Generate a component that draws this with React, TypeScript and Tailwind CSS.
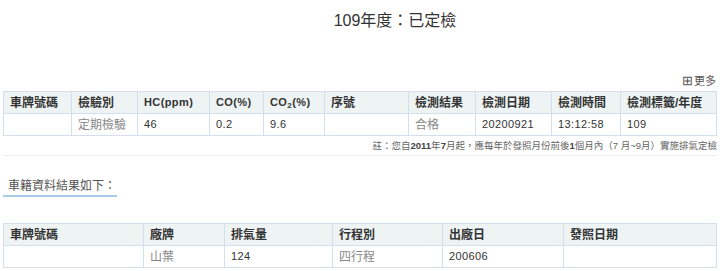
const cjk = "font-['Liberation_Sans','Noto_Sans_CJK_TC',sans-serif]";

const inspectCols = [
  { label: "車牌號碼", w: "w-[68px]" },
  { label: "檢驗別", w: "w-[66px]" },
  { label: "HC(ppm)", w: "w-[72px]" },
  { label: "CO(%)", w: "w-[54px]" },
  { label: "CO2", w: "w-[61px]" },
  { label: "序號", w: "w-[84px]" },
  { label: "檢測結果", w: "w-[67px]" },
  { label: "檢測日期", w: "w-[76px]" },
  { label: "檢測時間", w: "w-[69px]" },
  { label: "檢測標籤/年度", w: "" },
];

const inspectRow = ["", "定期檢驗", "46", "0.2", "9.6", "", "合格", "20200921", "13:12:58", "109"];

const carCols = [
  { label: "車牌號碼", w: "w-[140px]" },
  { label: "廠牌", w: "w-[81px]" },
  { label: "排氣量", w: "w-[108px]" },
  { label: "行程別", w: "w-[110px]" },
  { label: "出廠日", w: "w-[121px]" },
  { label: "發照日期", w: "" },
];

const carRow = ["", "山葉", "124", "四行程", "200606", ""];

const isCjk = (s: string) => /[\u4e00-\u9fff]/.test(s);

function HeaderCell({ label, w }: { label: string; w: string }) {
  return (
    <th
      className={`${w} h-[22px] whitespace-nowrap border border-[#d3dfea] bg-[#eef3f3] px-[6px] text-left font-bold text-[#333] ${
        isCjk(label) ? "text-[12px]" : "text-[11px] tracking-[0.4px]"
      }`}
    >
      {label === "CO2" ? (
        <>
          CO<sub className="text-[8px]">2</sub>(%)
        </>
      ) : (
        label
      )}
    </th>
  );
}

function DataCell({ value }: { value: string }) {
  return (
    <td
      className={`h-[22px] whitespace-nowrap border border-[#d3dfea] px-[6px] ${
        isCjk(value) ? "text-[12px] text-[#888]" : "text-[11px] tracking-[0.4px] text-[#333]"
      }`}
    >
      {value}
    </td>
  );
}

export default function App() {
  return (
    <div className={`${cjk} h-[271px] w-[720px] overflow-hidden bg-white`}>
      <h2 className="pl-[70px] pt-[11px] text-center text-[16px] leading-5 text-[#333]">
        109年度：已定檢
      </h2>

      <div className="mt-[43px] flex items-center justify-end pr-[4px] text-[11px] leading-[14px] text-[#555]">
        <span className="mr-[1px] text-[13px] leading-[14px]">⊞</span>更多
      </div>

      <div className="mx-[3px] mt-[3px]">
        <table className="w-full table-fixed border-collapse">
          <thead>
            <tr>
              {inspectCols.map((c) => (
                <HeaderCell key={c.label} {...c} />
              ))}
            </tr>
          </thead>
          <tbody>
            <tr>
              {inspectRow.map((v, i) => (
                <DataCell key={i} value={v} />
              ))}
            </tr>
          </tbody>
        </table>

        <p className="mt-[2px] whitespace-nowrap text-right text-[9.5px] leading-[15px] text-[#666]">
          註：您自<b className="text-[#444]">2011</b>年<b className="text-[#444]">7</b>月起，應每年於發照月份前後
          <b className="text-[#444]">1</b>個月內（7 月~9月）實施排氣定檢
        </p>
        <div className="mt-[2px] border-t border-[#f0f0f0]" />
      </div>

      <div className="mx-[3px] mt-[21px] inline-block border-b-2 border-[#a8cce2] pl-[5px] pr-[1px] text-[12px] leading-[18px] text-[#555]">
        車籍資料結果如下：
      </div>

      <div className="mx-[3px] mt-[26px]">
        <table className="w-full table-fixed border-collapse">
          <thead>
            <tr>
              {carCols.map((c) => (
                <HeaderCell key={c.label} {...c} />
              ))}
            </tr>
          </thead>
          <tbody>
            <tr>
              {carRow.map((v, i) => (
                <DataCell key={i} value={v} />
              ))}
            </tr>
          </tbody>
        </table>
      </div>
    </div>
  );
}
